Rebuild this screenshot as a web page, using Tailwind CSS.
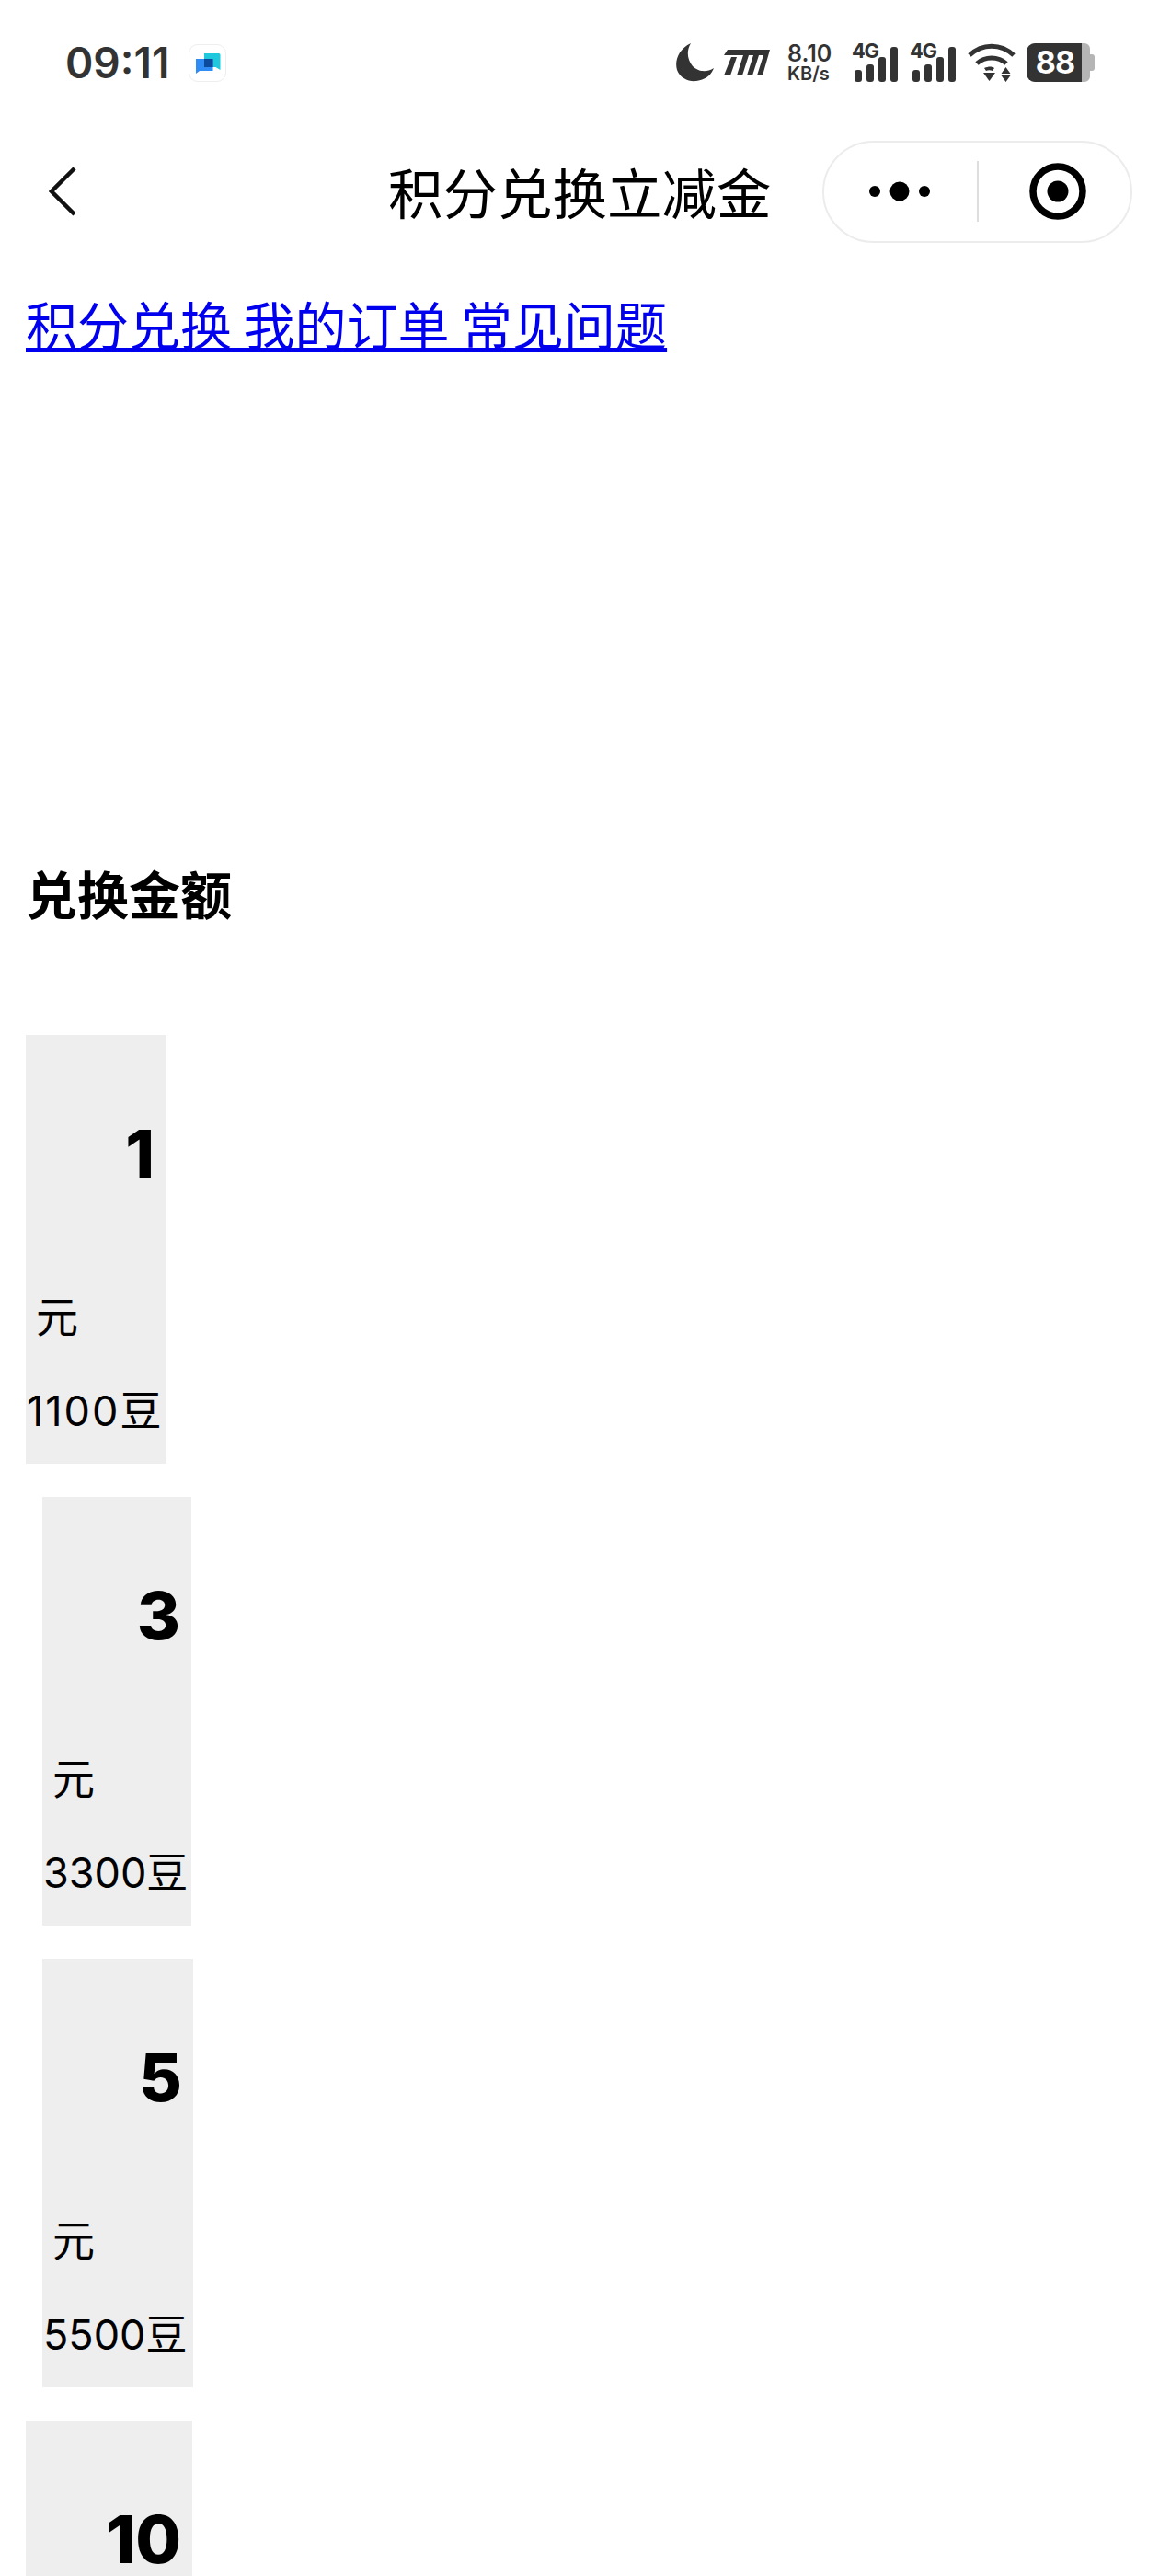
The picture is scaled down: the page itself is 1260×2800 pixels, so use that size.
<!DOCTYPE html>
<html lang="zh">
<head>
<meta charset="utf-8">
<script src="https://cdn.jsdelivr.net/npm/@tailwindcss/browser@4"></script>
<title>积分兑换立减金</title>
</head>
<body class="bg-white text-black font-['Inter','Noto_Sans_CJK_SC',sans-serif]">
<div class="w-[1260px] h-[2800px] overflow-hidden">
  <!-- status bar -->
  <div class="h-[136px] flex items-center pl-[71px] text-[#333]">
    <span class="font-semibold text-[46px] leading-none w-[112px] whitespace-nowrap">09:11</span>
    <span class="ml-[22px] w-[41px] h-[41px] rounded-[10px] border border-[#eeeeee] flex items-center justify-center">
      <svg width="28" height="24" viewBox="0 0 28 24"><path d="M10 2h16a1.500 1.500 0 0 1 1.500 1.500V20l-5-3H10z" fill="#1fc8dc"/><path d="M1 8h17a1.500 1.500 0 0 1 1.500 1.500V21H5l-4 3z" fill="#2f8cf5"/><rect x="10" y="8" width="9.500" height="9" fill="#0c4a9e"/></svg>
    </span>
    <!-- moon -->
    <svg class="ml-[488px]" width="42" height="42" viewBox="0 0 42 42"><path d="M17 0C4 6-1 19 2 29c3 9 13 13 21 12 9-1 16-6 19-14-8 5-17 4-23-2C13 18 12 8 17 0z" fill="#333"/></svg>
    <!-- m logo -->
    <svg class="ml-[11px]" width="50" height="28" viewBox="0 0 50 28"><path d="M4 0h46l-8 28h-6l7-22h-5l-7 22h-6l7-22h-5l-7 22h-6l7-22H0z" fill="#333"/><path d="M0 28L8 8h6L7 28z" fill="#333"/></svg>
    <!-- speed -->
    <div class="ml-[19px] w-[51px] flex flex-col font-semibold whitespace-nowrap">
      <span class="text-[25px] leading-[25px]">8.10</span>
      <span class="text-[20px] leading-[19px]">KB/s</span>
    </div>
    <!-- signal 1 -->
    <div class="ml-[19px] relative w-[50px] h-[42px]">
      <span class="absolute left-0 top-[-3px] font-bold text-[22px] leading-[22px] tracking-[-1.5px]">4G</span>
      <svg class="absolute left-0 top-0" width="50" height="42" viewBox="0 0 50 42"><g fill="#333"><rect x="3" y="29" width="8" height="13" rx="3"/><rect x="16" y="23" width="8" height="19" rx="3"/><rect x="29" y="15" width="8" height="27" rx="3"/><rect x="42" y="4" width="8" height="38" rx="3"/></g></svg>
    </div>
    <!-- signal 2 -->
    <div class="ml-[13px] relative w-[50px] h-[42px]">
      <span class="absolute left-0 top-[-3px] font-bold text-[22px] leading-[22px] tracking-[-1.5px]">4G</span>
      <svg class="absolute left-0 top-0" width="50" height="42" viewBox="0 0 50 42"><g fill="#333"><rect x="3" y="29" width="8" height="13" rx="3"/><rect x="16" y="23" width="8" height="19" rx="3"/><rect x="29" y="15" width="8" height="27" rx="3"/><rect x="42" y="4" width="8" height="38" rx="3"/></g></svg>
    </div>
    <!-- wifi -->
    <svg class="ml-[13px]" width="52" height="42" viewBox="0 0 52 42"><g fill="none" stroke="#333" stroke-width="5"><path d="M2 13C16 0 36 0 50 13"/><path d="M10 22c9-8 23-8 32 0"/></g><path d="M18 27c5-2 8-2 11 0l-2 3c-2-1-5-1-7 0z" fill="#333"/><path d="M17 32h13l-6.500 9z" fill="#333"/><path d="M41.500 26l5 7H36.500zM36.500 35h10l-5 7z" fill="#333"/></svg>
    <!-- battery -->
    <div class="ml-[12px] flex items-center">
      <div class="w-[69px] h-[42px] rounded-l-[9px] rounded-r-[6px] overflow-hidden flex bg-[#b5b5b5]">
        <div class="w-[60px] bg-[#333] text-white font-bold text-[34px] tracking-[-1px] leading-[42px] text-center pl-[2px]">88</div>
      </div>
      <div class="w-[5px] h-[18px] rounded-r-[3px] bg-[#b5b5b5]"></div>
    </div>
  </div>

  <!-- nav bar -->
  <div class="h-[144px] flex items-center">
    <svg class="ml-[53px]" width="30" height="54" viewBox="0 0 30 54"><path d="M28 2L3 27l25 25" fill="none" stroke="#111" stroke-width="4.500"/></svg>
    <h1 class="ml-[339px] text-[59.5px] leading-none font-normal font-['Noto_Sans_CJK_SC',sans-serif] whitespace-nowrap">积分兑换立减金</h1>
    <div class="ml-auto mr-[29px] w-[337px] h-[111px] rounded-[56px] border-[2px] border-[#ececec] flex items-center">
      <svg class="ml-[43px]" width="80" height="22" viewBox="0 0 80 22"><g fill="#000"><circle cx="12" cy="11" r="6"/><circle cx="39" cy="11" r="10.500"/><circle cx="66" cy="11" r="6"/></g></svg>
      <div class="ml-[43px] w-[2px] h-[66px] bg-[#dedede]"></div>
      <svg class="ml-[55px]" width="62" height="62" viewBox="0 0 62 62"><circle cx="31" cy="31" r="27" fill="none" stroke="#000" stroke-width="7.500"/><circle cx="31" cy="31" r="11.500" fill="#000"/></svg>
    </div>
  </div>

  <!-- tabs -->
  <div class="pl-[28px] pt-[33px]">
    <a href="#" class="text-[56px] leading-[76px] text-[#0000ee] underline font-['Noto_Sans_CJK_SC',sans-serif]">积分兑换 我的订单 常见问题</a>
  </div>

  <!-- heading -->
  <h2 class="mt-[543px] pl-[28px] text-[56px] leading-[76px] font-bold font-['Noto_Sans_CJK_SC',sans-serif]">兑换金额</h2>

  <!-- amount list -->
  <div class="mt-[117px] flex flex-col items-start gap-[36px]">
    <div class="ml-[28px] w-[153px] h-[466px] bg-[#eeeeee] flex flex-col">
      <div class="mt-[71px] pr-[13px] h-[116px] text-right text-[72px] leading-[116px] font-extrabold">1</div>
      <div class="mt-[78px] pl-[11px] text-[46px] leading-[82px]">元</div>
      <div class="mt-[21px] pl-[1px] text-[45px] leading-[82px] tracking-[2px] whitespace-nowrap">1100豆</div>
    </div>
    <div class="ml-[46px] w-[162px] h-[466px] bg-[#eeeeee] flex flex-col">
      <div class="mt-[71px] pr-[12px] h-[116px] text-right text-[72px] leading-[116px] font-extrabold">3</div>
      <div class="mt-[78px] pl-[11px] text-[46px] leading-[82px]">元</div>
      <div class="mt-[21px] pl-[1px] text-[45px] leading-[82px] whitespace-nowrap">3300豆</div>
    </div>
    <div class="ml-[46px] w-[164px] h-[466px] bg-[#eeeeee] flex flex-col">
      <div class="mt-[71px] pr-[12px] h-[116px] text-right text-[72px] leading-[116px] font-extrabold">5</div>
      <div class="mt-[78px] pl-[11px] text-[46px] leading-[82px]">元</div>
      <div class="mt-[21px] pl-[1px] text-[45px] leading-[82px] whitespace-nowrap">5500豆</div>
    </div>
    <div class="ml-[28px] w-[181px] h-[466px] bg-[#eeeeee] flex flex-col">
      <div class="mt-[71px] pr-[12px] h-[116px] text-right text-[72px] leading-[116px] font-extrabold">10</div>
    </div>
  </div>
</div>
</body>
</html>
